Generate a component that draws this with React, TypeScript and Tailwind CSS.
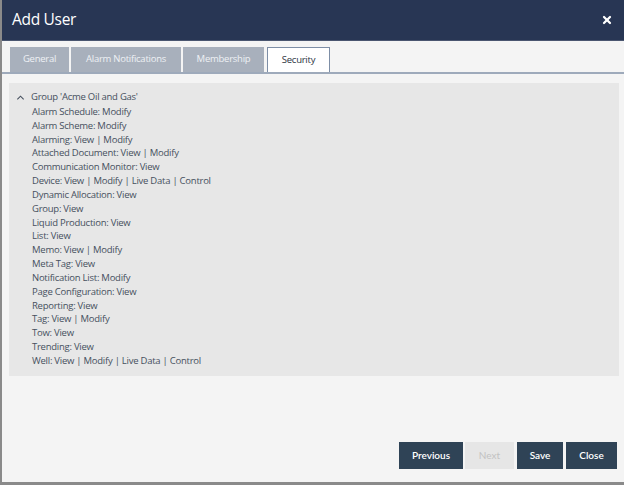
import { X } from 'lucide-react';

const tabs = ['General', 'Alarm Notifications', 'Membership', 'Security'];

const perms = [
  'Alarm Schedule: Modify',
  'Alarm Scheme: Modify',
  'Alarming: View | Modify',
  'Attached Document: View | Modify',
  'Communication Monitor: View',
  'Device: View | Modify | Live Data | Control',
  'Dynamic Allocation: View',
  'Group: View',
  'Liquid Production: View',
  'List: View',
  'Memo: View | Modify',
  'Meta Tag: View',
  'Notification List: Modify',
  'Page Configuration: View',
  'Reporting: View',
  'Tag: View | Modify',
  'Tow: View',
  'Trending: View',
  'Well: View | Modify | Live Data | Control',
];

const tabWidths: Record<string, string> = {
  General: 'w-[59px]',
  'Alarm Notifications': 'w-[110px]',
  Membership: 'w-[81px]',
  Security: 'w-[63px]',
};

export default function App() {
  return (
    <div className="w-[624px] h-[485px] flex flex-col bg-[#f4f4f4] border-l-2 border-b-[3px] border-[#8a8a8a] font-['Open_Sans',sans-serif] overflow-hidden">
      <div className="h-[41px] shrink-0 bg-[#283654] flex items-center justify-between pl-[10px] pr-[11px] border-b border-[#4a5670]">
        <h1 className="text-[15.5px] text-white tracking-[-0.3px]">Add User</h1>
        <X className="w-[12px] h-[12px] text-white" strokeWidth={4.5} />
      </div>

      <div className="mt-[6px] flex items-end gap-[2px] pl-[8px] border-b-2 border-[#9eaabb] h-[27px]">
        {tabs.map((t) => {
          const active = t === 'Security';
          return (
            <div
              key={t}
              className={
                (active
                  ? 'h-[25px] flex items-center justify-center bg-white border border-b-0 border-[#7d8ea6] text-[#2b3440] text-[9.5px] tracking-[-0.25px] ml-[1px] '
                  : 'h-[25px] flex items-center justify-center bg-[#a8b0bc] text-[#eef1f5] text-[9.5px] tracking-[-0.25px] ') + tabWidths[t]
              }
            >
              {t}
            </div>
          );
        })}
      </div>

      <div className="mt-[9px] ml-[7px] mr-[5px] h-[293px] bg-[#e7e7e7] pt-[7px] pl-[7px] text-[#46505e] text-[9.5px] tracking-[-0.25px]">
        <div className="flex items-center leading-[14px]">
          <svg className="w-[9px] h-[9px] mr-[6px]" viewBox="0 0 10 10" fill="none" stroke="#46505e" strokeWidth="1.2">
            <path d="M1.5 7 L5 3.5 L8.5 7" />
          </svg>
          <span>Group 'Acme Oil and Gas'</span>
        </div>
        <div className="pl-[16px] mt-[1px] flex flex-col">
          {perms.map((p) => (
            <div key={p} className="leading-[13.83px]">
              {p}
            </div>
          ))}
        </div>
      </div>

      <div className="flex-1 flex items-end justify-end pr-[7px] pb-[13px] font-['Lato',sans-serif]">
        <button className="h-[27px] w-[64px] bg-[#2f4356] text-white text-[10px] font-semibold">Previous</button>
        <button className="h-[27px] w-[49px] ml-[2px] bg-[#e6e6e6] text-[#c2c2c2] text-[10px]">Next</button>
        <button className="h-[27px] w-[46px] ml-[3px] bg-[#2f4356] text-white text-[10px] font-semibold">Save</button>
        <button className="h-[27px] w-[51px] ml-[3px] bg-[#2f4356] text-white text-[10px] font-semibold">Close</button>
      </div>
    </div>
  );
}
